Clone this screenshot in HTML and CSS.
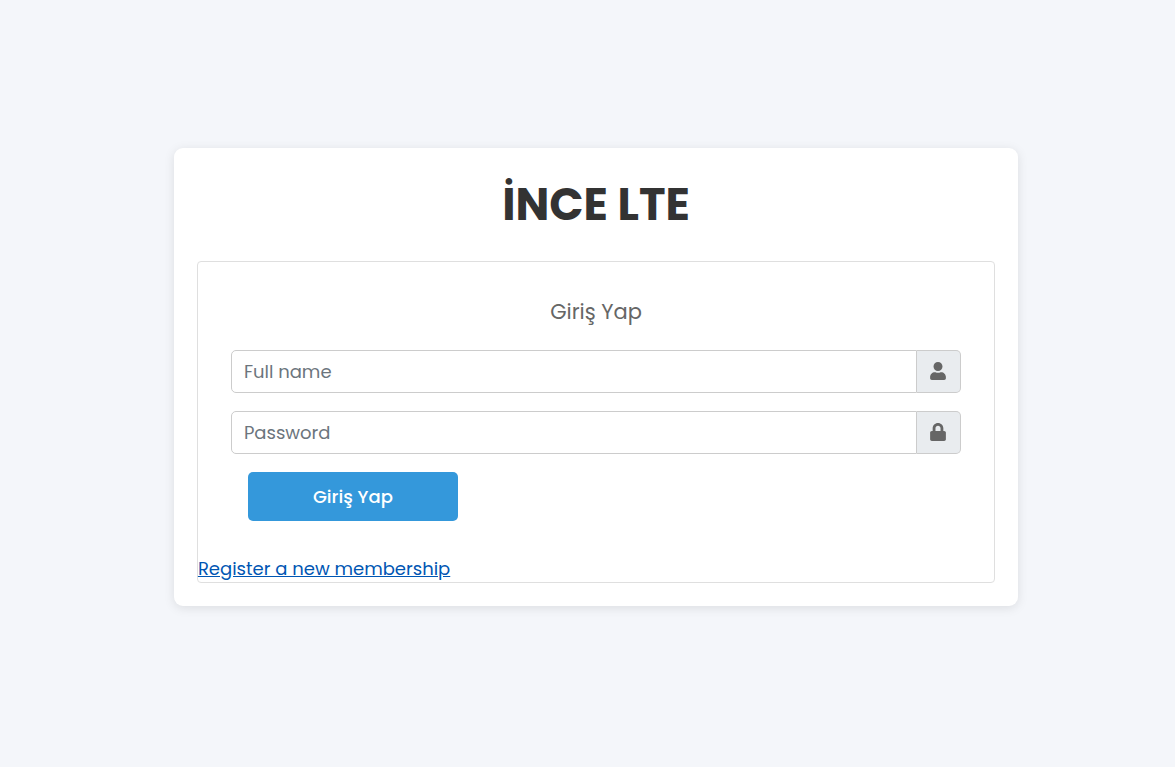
FILE: index.html
```html
<!DOCTYPE html>
<html lang="tr">
<head>
<meta charset="utf-8">
<meta name="viewport" content="width=device-width, initial-scale=1">
<title>İNCE LTE</title>
<link rel="stylesheet" href="styles.css">
</head>
<body>
<main class="login-box">
  <h1 class="login-logo">İNCE LTE</h1>
  <section class="card">
    <div class="card-body">
      <p class="login-msg">Giriş Yap</p>
      <form class="login-form">
        <div class="input-group">
          <input class="field" type="text" placeholder="Full name" aria-label="Full name">
          <span class="addon"><svg class="icon" viewBox="0 0 448 512" aria-hidden="true"><path d="M224 256c70.700 0 128-57.300 128-128S294.700 0 224 0 96 57.300 96 128s57.300 128 128 128zm89.600 32h-16.700c-22.200 10.200-46.900 16-72.900 16s-50.600-5.800-72.900-16h-16.700C60.200 288 0 348.200 0 422.400V464c0 26.500 21.500 48 48 48h352c26.500 0 48-21.500 48-48v-41.600c0-74.200-60.200-134.400-134.400-134.400z"/></svg></span>
        </div>
        <div class="input-group">
          <input class="field" type="password" placeholder="Password" aria-label="Password">
          <span class="addon"><svg class="icon" viewBox="0 0 448 512" aria-hidden="true"><path d="M400 224h-24v-72C376 68.200 307.800 0 224 0S72 68.200 72 152v72H48c-26.500 0-48 21.500-48 48v192c0 26.500 21.500 48 48 48h352c26.500 0 48-21.500 48-48V272c0-26.500-21.500-48-48-48zm-104 0H152v-72c0-39.700 32.300-72 72-72s72 32.300 72 72v72z"/></svg></span>
        </div>
        <button class="submit" type="submit">Giriş Yap</button>
      </form>
    </div>
    <a class="register" href="#">Register a new membership</a>
  </section>
</main>
</body>
</html>
```
FILE: styles.css
```css
* { box-sizing: border-box; }

body {
  display: flex;
  align-items: center;
  justify-content: center;
  min-height: 100vh;
  margin: 0;
  padding: 0 0 13px 17px;
  background: #f4f6fa;
  color: #666;
  font-family: Poppins, Inter, sans-serif;
  font-size: 18px;
}

.login-box {
  width: 72.9%;
  padding: 23px;
  border-radius: 9px;
  background: #fff;
  box-shadow: 0 2px 11px rgba(0, 0, 0, 0.1);
}

.login-logo {
  margin: 0 0 23px;
  color: #333;
  font-size: 45px;
  font-weight: 700;
  line-height: 67px;
  text-align: center;
}

.card {
  border: 1px solid #dfdfdf;
  border-radius: 4px;
}

.card-body { padding: 33px 33px 34px; }

.login-msg {
  margin: 0 0 22px;
  font-size: 21px;
  line-height: 33px;
  text-align: center;
}

.login-form {
  display: flex;
  flex-direction: column;
  gap: 18px;
}

.input-group {
  display: flex;
  height: 43px;
}

.field {
  flex: 1;
  min-width: 0;
  padding: 0 12px;
  border: 1px solid #ccc;
  border-radius: 5px 0 0 5px;
  background: #fff;
  color: #495057;
  font: inherit;
}

.field::placeholder { color: #6c757d; opacity: 1; }

.addon {
  display: flex;
  align-items: center;
  justify-content: center;
  width: 44px;
  padding: 0 1px 1px 0;
  border: 1px solid #ccc;
  border-left: 0;
  border-radius: 0 5px 5px 0;
  background: #e9ecef;
}

.icon {
  width: 16px;
  height: 18px;
  fill: #666;
}

.submit {
  width: 210px;
  height: 49px;
  margin: 0 17px;
  border: 0;
  border-radius: 5px;
  background: #3498db;
  color: #fff;
  font: inherit;
  font-weight: 500;
}

.register {
  display: block;
  width: fit-content;
  color: #0056b3;
  line-height: 27px;
}
```
